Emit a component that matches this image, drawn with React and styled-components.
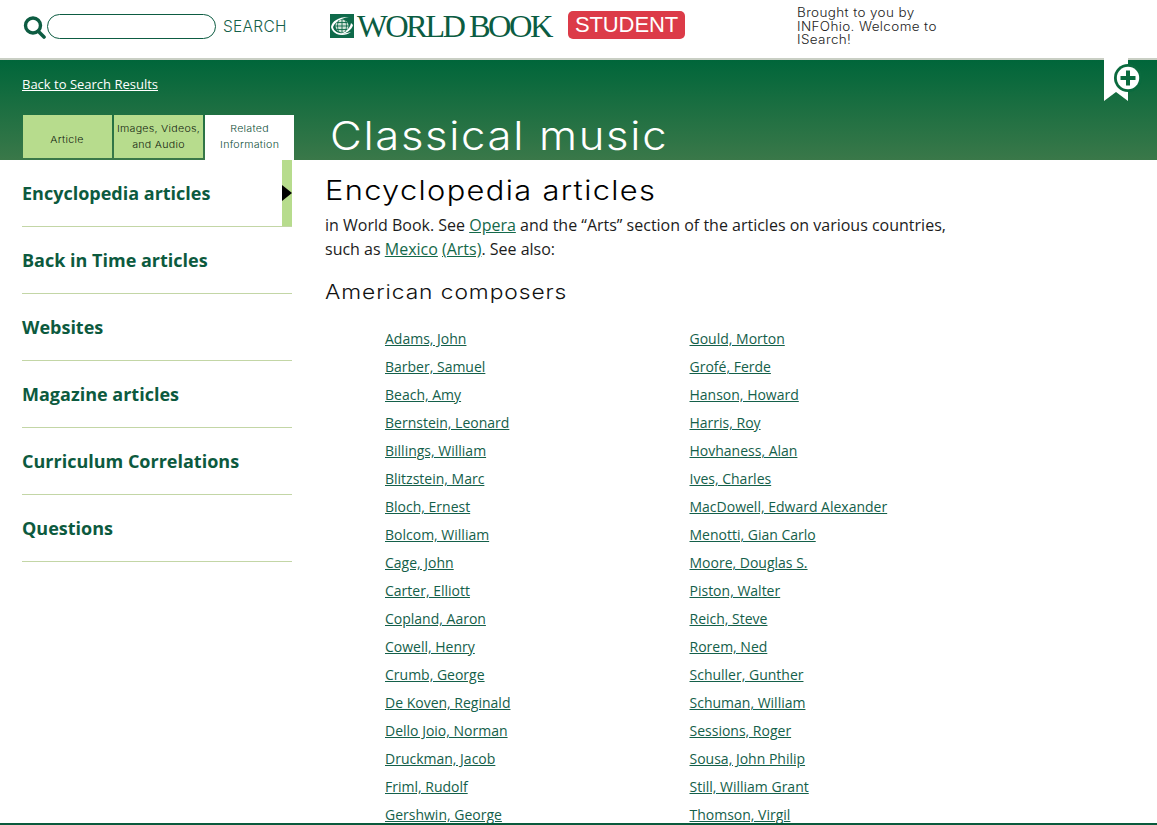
import React from "react";
import styled, { createGlobalStyle } from "styled-components";

const display = `Inter, "DejaVu Sans", sans-serif`;
const body = `"Open Sans", "Noto Sans", sans-serif`;

const Global = createGlobalStyle`
  html, body { margin: 0; padding: 0; background: #fff; overflow: hidden; }
  * { box-sizing: border-box; }
`;
const Page = styled.div`
  height: 825px; width: 1157px; display: flex; flex-direction: column; overflow: hidden;
  position: relative; font-family: ${body}; border-bottom: 2px solid #0a5a3c;
`;
const Header = styled.header`
  height: 60px; flex: none; display: flex; align-items: flex-start; background: #fff;
  border-bottom: 2px solid #c9cfc4; position: relative;
`;
const SearchBox = styled.form`
  display: flex; align-items: center; margin: 14px 0 0 23px; width: 307px; height: 25px;
`;
const SearchInput = styled.div`
  width: 169px; height: 25px; border: 1px solid #0d5c42; border-radius: 13px; margin-left: 1px;
`;
const SearchLabel = styled.span`
  margin-left: 7px; font: 300 15.5px ${display}; color: #15614a; letter-spacing: 0.3px; white-space: nowrap;
`;
const Logo = styled.div`
  display: flex; align-items: center; height: 28px; margin-top: 12px; width: 467px;
`;
const LogoText = styled.span`
  margin-left: 3px; font: 400 32.5px "Liberation Serif", serif; color: #0b5c42; letter-spacing: -2.55px; white-space: nowrap; line-height: 28px; width: 198px;
`;
const Badge = styled.span`
  margin-left: 13px; margin-top: -2px; width: 117px; height: 28px; border-radius: 5px; background: #dc3b48; color: #fff;
  font: 400 22px "Liberation Sans", sans-serif; display: flex; align-items: center; justify-content: center; letter-spacing: -0.1px;
`;
const Brought = styled.div`
  margin-top: 6px; width: 131px; font: 300 12.6px/13.7px ${display}; color: #222; letter-spacing: 0.35px;
  transform: scaleX(1.07); transform-origin: left;
`;
const Hero = styled.section`
  height: 100px; flex: none; background: linear-gradient(#00663a, #3a7849); display: flex; flex-direction: column; padding-left: 22px;
`;
const BackLink = styled.a`
  margin-top: 15px; height: 18px; font: 400 13px/18px ${body}; color: #fff; text-decoration: underline; align-self: flex-start;
`;
const HeroRow = styled.div`
  display: flex; margin-top: 22px; height: 45px;
`;
const Tabs = styled.div`
  display: flex; gap: 2px; width: 308px; padding-left: 1px; align-items: flex-start;
`;
const Tab = styled.div`
  width: 89px; height: ${p => (p.$active ? 45 : 43)}px; background: ${p => (p.$active ? "#fff" : "#b7dc8d")};
  color: ${p => (p.$active ? "#0f4f38" : "#141f10")};
  display: flex; align-items: ${p => (p.$low ? "flex-end" : "center")}; justify-content: center;
  padding: ${p => (p.$low ? "0 0 10px" : p.$active ? "0 0 2px" : "0")};
`;
const TabLabel = styled.span`
  display: inline-block; font: 300 9.6px/16px ${display}; text-align: center; letter-spacing: 0.25px; white-space: pre-line;
  transform: scaleX(1.11);
`;
const Title = styled.h1`
  margin: 0; font: 300 39px/42px ${display}; color: #fff; letter-spacing: 1.5px; white-space: nowrap;
  transform: scaleX(1.118); transform-origin: left;
`;
const Bookmark = styled.div`
  position: absolute; left: 1104px; top: 58px; width: 40px; height: 44px;
`;
const Content = styled.div`
  display: flex; flex: 1; min-height: 0; padding-left: 22px;
`;
const Sidebar = styled.nav`
  width: 270px; flex: none; display: flex; flex-direction: column;
`;
const NavItem = styled.a`
  height: 67px; flex: none; border-bottom: 1px solid #c3d6a6; font: 700 18px/1 ${body}; color: #0c5a3e;
  display: flex; align-items: center; position: relative; text-decoration: none;
`;
const ActiveBar = styled.span`
  position: absolute; right: 0; top: 0; bottom: 0; width: 10px; background: #b7dc8d;
  &::after {
    content: ""; position: absolute; left: 0; top: 25px; border-left: 10px solid #000;
    border-top: 8.5px solid transparent; border-bottom: 8.5px solid transparent;
  }
`;
const Main = styled.main`
  margin-left: 33px; flex: 1; min-width: 0;
`;
const Heading = styled.h2`
  margin: 12px 0 0; font: 300 27.5px/36px ${display}; color: #000; letter-spacing: 1.2px; white-space: nowrap;
  transform: scaleX(1.12); transform-origin: left;
`;
const Para = styled.p`
  margin: 5px 0 0; width: 640px; font: 400 16px/24px ${body}; color: #1c1c1c;
`;
const TextLink = styled.a`
  color: #14694a; text-decoration: underline;
`;
const SubHeading = styled.h3`
  margin: 17px 0 0; font: 300 20px/28px ${display}; color: #111; letter-spacing: 0.8px; white-space: nowrap;
  transform: scaleX(1.14); transform-origin: left;
`;
const Columns = styled.div`
  display: grid; grid-template-columns: 304.5px 304px; margin: 19px 0 0 60px;
`;
const Column = styled.ul`
  margin: 0; padding: 0; list-style: none;
`;
const Row = styled.li`
  height: 28px; font: 400 14px/28px ${body}; white-space: nowrap;
`;
const NameLink = styled.a`
  color: #14604a; text-decoration: underline;
`;

const left = ["Adams, John","Barber, Samuel","Beach, Amy","Bernstein, Leonard","Billings, William","Blitzstein, Marc","Bloch, Ernest","Bolcom, William","Cage, John","Carter, Elliott","Copland, Aaron","Cowell, Henry","Crumb, George","De Koven, Reginald","Dello Joio, Norman","Druckman, Jacob","Friml, Rudolf","Gershwin, George"];
const right = ["Gould, Morton","Grofé, Ferde","Hanson, Howard","Harris, Roy","Hovhaness, Alan","Ives, Charles","MacDowell, Edward Alexander","Menotti, Gian Carlo","Moore, Douglas S.","Piston, Walter","Reich, Steve","Rorem, Ned","Schuller, Gunther","Schuman, William","Sessions, Roger","Sousa, John Philip","Still, William Grant","Thomson, Virgil"];
const nav = ["Encyclopedia articles","Back in Time articles","Websites","Magazine articles","Curriculum Correlations","Questions"];

const SearchIcon = () => (
  <svg width="23" height="24" viewBox="0 0 23 24" fill="none" stroke="#0d5c42">
    <circle cx="10" cy="10.5" r="7.5" strokeWidth="3.4" />
    <path d="M15.5 16.5 L21 22" strokeWidth="3.6" strokeLinecap="round" />
  </svg>
);
const Globe = () => (
  <svg width="24" height="24" viewBox="0 0 24 24">
    <rect width="24" height="24" fill="#0f6a4a" />
    <path d="M1 13C2 7 9 2.5 19 3C15 3.5 6 6 3 13C4 19 12 21 21 18C15 23 3 22 1 13Z" fill="#fff" />
    <path d="M23 11C22 16 16 20 8 21C14 19 20 15 21 9Z" fill="#fff" />
    <circle cx="12" cy="12" r="6.5" fill="#cfe3d6" />
    <path d="M5.5 12h13M12 5.5v13M7 8.5h10M7 15.5h10M9 6.2c-2 3.5-2 8 0 11.6M15 6.2c2 3.5 2 8 0 11.6" stroke="#0f6a4a" strokeWidth="0.9" fill="none" />
  </svg>
);
const BookmarkIcon = () => (
  <svg width="40" height="44" viewBox="0 0 40 44">
    <path d="M0 0H24V43L12 34L0 43Z" fill="#fff" />
    <circle cx="24" cy="20" r="14" fill="#0a6a3e" />
    <circle cx="24" cy="20" r="11.2" fill="#fff" />
    <path d="M24 12.5V27.5M16.5 20H31.5" stroke="#0a6a3e" strokeWidth="4" />
  </svg>
);

export default function App() {
  return (
    <Page>
      <Global />
      <Header>
        <SearchBox>
          <SearchIcon />
          <SearchInput />
          <SearchLabel>SEARCH</SearchLabel>
        </SearchBox>
        <Logo>
          <Globe />
          <LogoText>WORLD BOOK</LogoText>
          <Badge>STUDENT</Badge>
        </Logo>
        <Brought>Brought to you by INFOhio. Welcome to ISearch!</Brought>
      </Header>
      <Hero>
        <BackLink href="#">Back to Search Results</BackLink>
        <HeroRow>
          <Tabs>
            <Tab $low><TabLabel>Article</TabLabel></Tab>
            <Tab><TabLabel>{"Images, Videos,\nand Audio"}</TabLabel></Tab>
            <Tab $active><TabLabel>{"Related\nInformation"}</TabLabel></Tab>
          </Tabs>
          <Title>Classical music</Title>
        </HeroRow>
      </Hero>
      <Bookmark><BookmarkIcon /></Bookmark>
      <Content>
        <Sidebar>
          {nav.map((n, i) => (
            <NavItem key={n} href="#">
              {n}
              {i === 0 && <ActiveBar />}
            </NavItem>
          ))}
        </Sidebar>
        <Main>
          <Heading>Encyclopedia articles</Heading>
          <Para>
            in World Book. See <TextLink href="#">Opera</TextLink> and the “Arts” section of the articles on various countries, such as <TextLink href="#">Mexico</TextLink> <TextLink href="#">(Arts)</TextLink>. See also:
          </Para>
          <SubHeading>American composers</SubHeading>
          <Columns>
            {[left, right].map((c, i) => (
              <Column key={i}>
                {c.map(n => (
                  <Row key={n}><NameLink href="#">{n}</NameLink></Row>
                ))}
              </Column>
            ))}
          </Columns>
        </Main>
      </Content>
    </Page>
  );
}
